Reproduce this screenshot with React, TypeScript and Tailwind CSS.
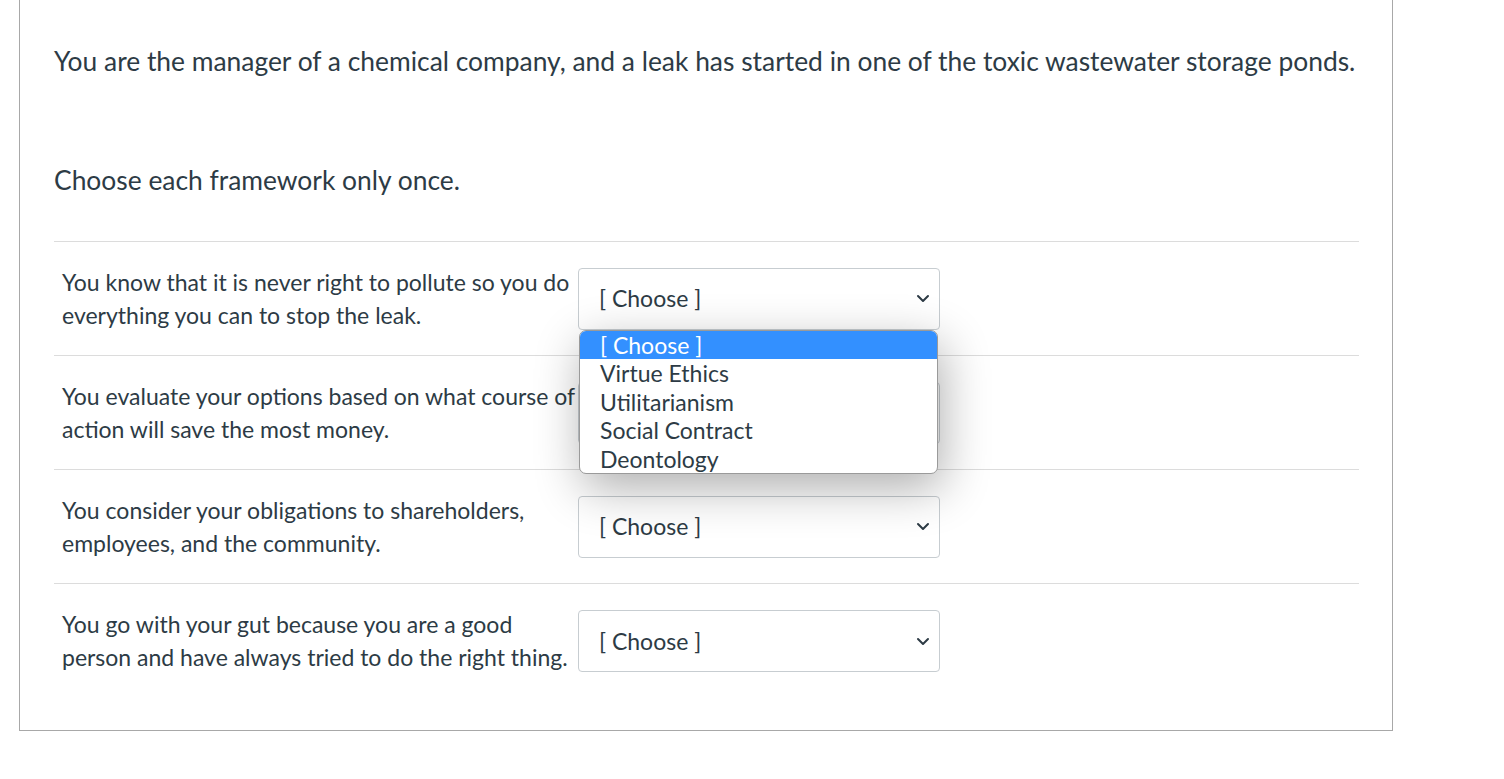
const rows = [
  "You know that it is never right to pollute so you do everything you can to stop the leak.",
  "You evaluate your options based on what course of action will save the most money.",
  "You consider your obligations to shareholders, employees, and the community.",
  "You go with your gut because you are a good person and have always tried to do the right thing.",
]

const options = ["[ Choose ]", "Virtue Ethics", "Utilitarianism", "Social Contract", "Deontology"]

function Chevron() {
  return (
    <svg width="14" height="9" viewBox="0 0 14 9" className="shrink-0">
      <path d="M2 2 L7 7 L12 2" fill="none" stroke="#2d3b45" strokeWidth="2" strokeLinecap="round" strokeLinejoin="round" />
    </svg>
  )
}

function FakeSelect({ open }: { open?: boolean }) {
  return (
    <div className="relative w-[362px] shrink-0">
      <div className="flex items-center justify-between h-[62px] pl-[20px] pr-[9px] border border-[#c7cdd1] rounded-[4px] bg-white">
        <span>[ Choose ]</span>
        <Chevron />
      </div>
      {open && (
        <div className="absolute left-[1px] top-[62px] w-[359px] z-10 bg-white border border-[#9a9a9a] rounded-[7px] overflow-hidden shadow-[4px_14px_48px_rgba(0,0,0,0.32)]">
          {options.map((o, i) => (
            <div
              key={o}
              className={
                "h-[28.6px] leading-[28px] pl-[20px] text-[23px] " +
                (i === 0 ? "bg-[#3390ff] text-white" : "text-[#2d3b45]")
              }
            >
              {o}
            </div>
          ))}
        </div>
      )}
    </div>
  )
}

function App() {
  return (
    <div className="h-screen w-full bg-white overflow-hidden font-['Lato','Liberation_Sans',sans-serif] text-[#2d3b45]">
      <div className="ml-[19px] w-[1374px] h-[731px] border-l border-r border-b border-[#a8a8a8] pl-[34px] pr-[33px]">
        <p className="pt-[43px] text-[26.4px] leading-[36px]">
          You are the manager of a chemical company, and a leak has started in one of the toxic wastewater storage ponds.
        </p>
        <p className="mt-[83px] text-[26.4px] leading-[36px]">Choose each framework only once.</p>

        <div className="mt-[43px] border-t border-[#dcdcdc] text-[23px] leading-[33px]">
          {rows.map((r, i) => (
            <div
              key={i}
              className={
                "flex items-center h-[114px] pl-[8px] " + (i < rows.length - 1 ? "border-b border-[#dcdcdc]" : "")
              }
            >
              <div className="w-[516px]">{r}</div>
              <FakeSelect open={i === 0} />
            </div>
          ))}
        </div>
      </div>
    </div>
  )
}

export default App
